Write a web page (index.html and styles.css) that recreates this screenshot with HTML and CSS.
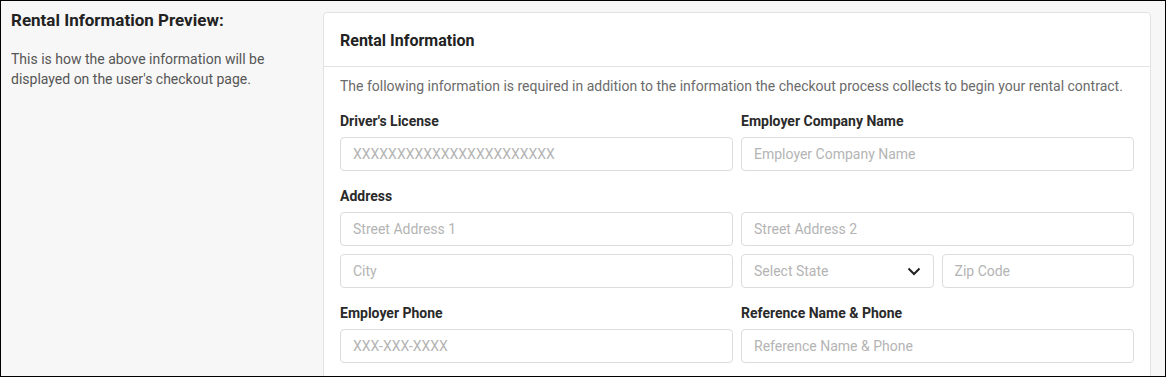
FILE: index.html
```html
<!DOCTYPE html>
<html lang="en">
<head>
  <meta charset="UTF-8">
  <title>Rental Information Preview</title>
  <link rel="stylesheet" href="styles.css">
</head>
<body>
  <div class="frame">
    <!-- Left description column -->
    <div class="side">
      <h2>Rental Information Preview:</h2>
      <p>This is how the above information will be displayed on the user's checkout page.</p>
    </div>

    <!-- Preview card -->
    <div class="card">
      <div class="card-header">Rental Information</div>
      <div class="card-body">
        <p class="intro">The following information is required in addition to the information the checkout process collects to begin your rental contract.</p>

        <div class="row">
          <div class="field">
            <label>Driver's License</label>
            <input type="text" placeholder="XXXXXXXXXXXXXXXXXXXXXXX">
          </div>
          <div class="field">
            <label>Employer Company Name</label>
            <input type="text" placeholder="Employer Company Name">
          </div>
        </div>

        <div class="field">
          <label>Address</label>
          <div class="address-grid">
            <input type="text" placeholder="Street Address 1">
            <input type="text" placeholder="Street Address 2">
            <input type="text" placeholder="City">
            <div class="row">
              <div class="select-wrap">
                <select>
                  <option>Select State</option>
                </select>
                <svg class="chevron" width="14" height="9" viewBox="0 0 14 9">
                  <path d="M1.5 1.5 L7 7 L12.5 1.5" fill="none" stroke="#222" stroke-width="2"/>
                </svg>
              </div>
              <input type="text" placeholder="Zip Code">
            </div>
          </div>
        </div>

        <div class="row">
          <div class="field">
            <label>Employer Phone</label>
            <input type="text" placeholder="XXX-XXX-XXXX">
          </div>
          <div class="field">
            <label>Reference Name &amp; Phone</label>
            <input type="text" placeholder="Reference Name &amp; Phone">
          </div>
        </div>
      </div>
    </div>
  </div>
</body>
</html>
```

FILE: styles.css
```css
body {
  margin: 0;
  padding: 0;
  font-family: Roboto, "Liberation Sans", sans-serif;
  color: #333;
}

.frame {
  width: 1166px;
  height: 377px;
  box-sizing: border-box;
  border: 1px solid #000;
  background: #f7f7f7;
  display: flex;
  overflow: hidden;
}

.side {
  width: 322px;
  flex-shrink: 0;
  padding: 9px 0 0 10px;
  box-sizing: border-box;
}

.side h2 {
  margin: 0;
  font-size: 17px;
  line-height: 20px;
  font-weight: bold;
  color: #222;
}

.side p {
  margin: 19px 0 0;
  font-size: 14px;
  line-height: 20px;
  color: #555;
  width: 270px;
}

.card {
  margin-top: 11px;
  width: 828px;
  flex-shrink: 0;
  box-sizing: border-box;
  background: #fff;
  border: 1px solid #e2e2e2;
  border-radius: 4px;
  align-self: flex-start;
}

.card-header {
  padding: 16px 16px 14px;
  font-size: 16px;
  line-height: 23px;
  font-weight: bold;
  color: #222;
  border-bottom: 1px solid #e2e2e2;
}

.card-body {
  padding: 9px 16px 20px;
}

.intro {
  margin: 0;
  font-size: 14px;
  line-height: 20px;
  color: #6b6b6b;
}

.row {
  display: grid;
  grid-template-columns: 1fr 1fr;
  gap: 8px;
}

.field {
  margin-top: 15px;
}

.field label {
  display: block;
  font-size: 14px;
  line-height: 20px;
  font-weight: bold;
  color: #2a2a2a;
  margin-bottom: 6px;
}

.address-grid {
  display: grid;
  grid-template-columns: 1fr 1fr;
  gap: 8px;
}

input[type="text"],
select {
  width: 100%;
  height: 34px;
  box-sizing: border-box;
  padding: 0 12px;
  border: 1px solid #dcdcdc;
  border-radius: 4px;
  background: #fff;
  font-family: Roboto, "Liberation Sans", sans-serif;
  font-size: 14px;
  color: #333;
  outline: none;
}

input::placeholder {
  color: #b4b4b4;
}

select {
  appearance: none;
  -webkit-appearance: none;
  color: #b4b4b4;
}

.select-wrap {
  position: relative;
}

.chevron {
  position: absolute;
  right: 13px;
  top: 13px;
  pointer-events: none;
}
```
